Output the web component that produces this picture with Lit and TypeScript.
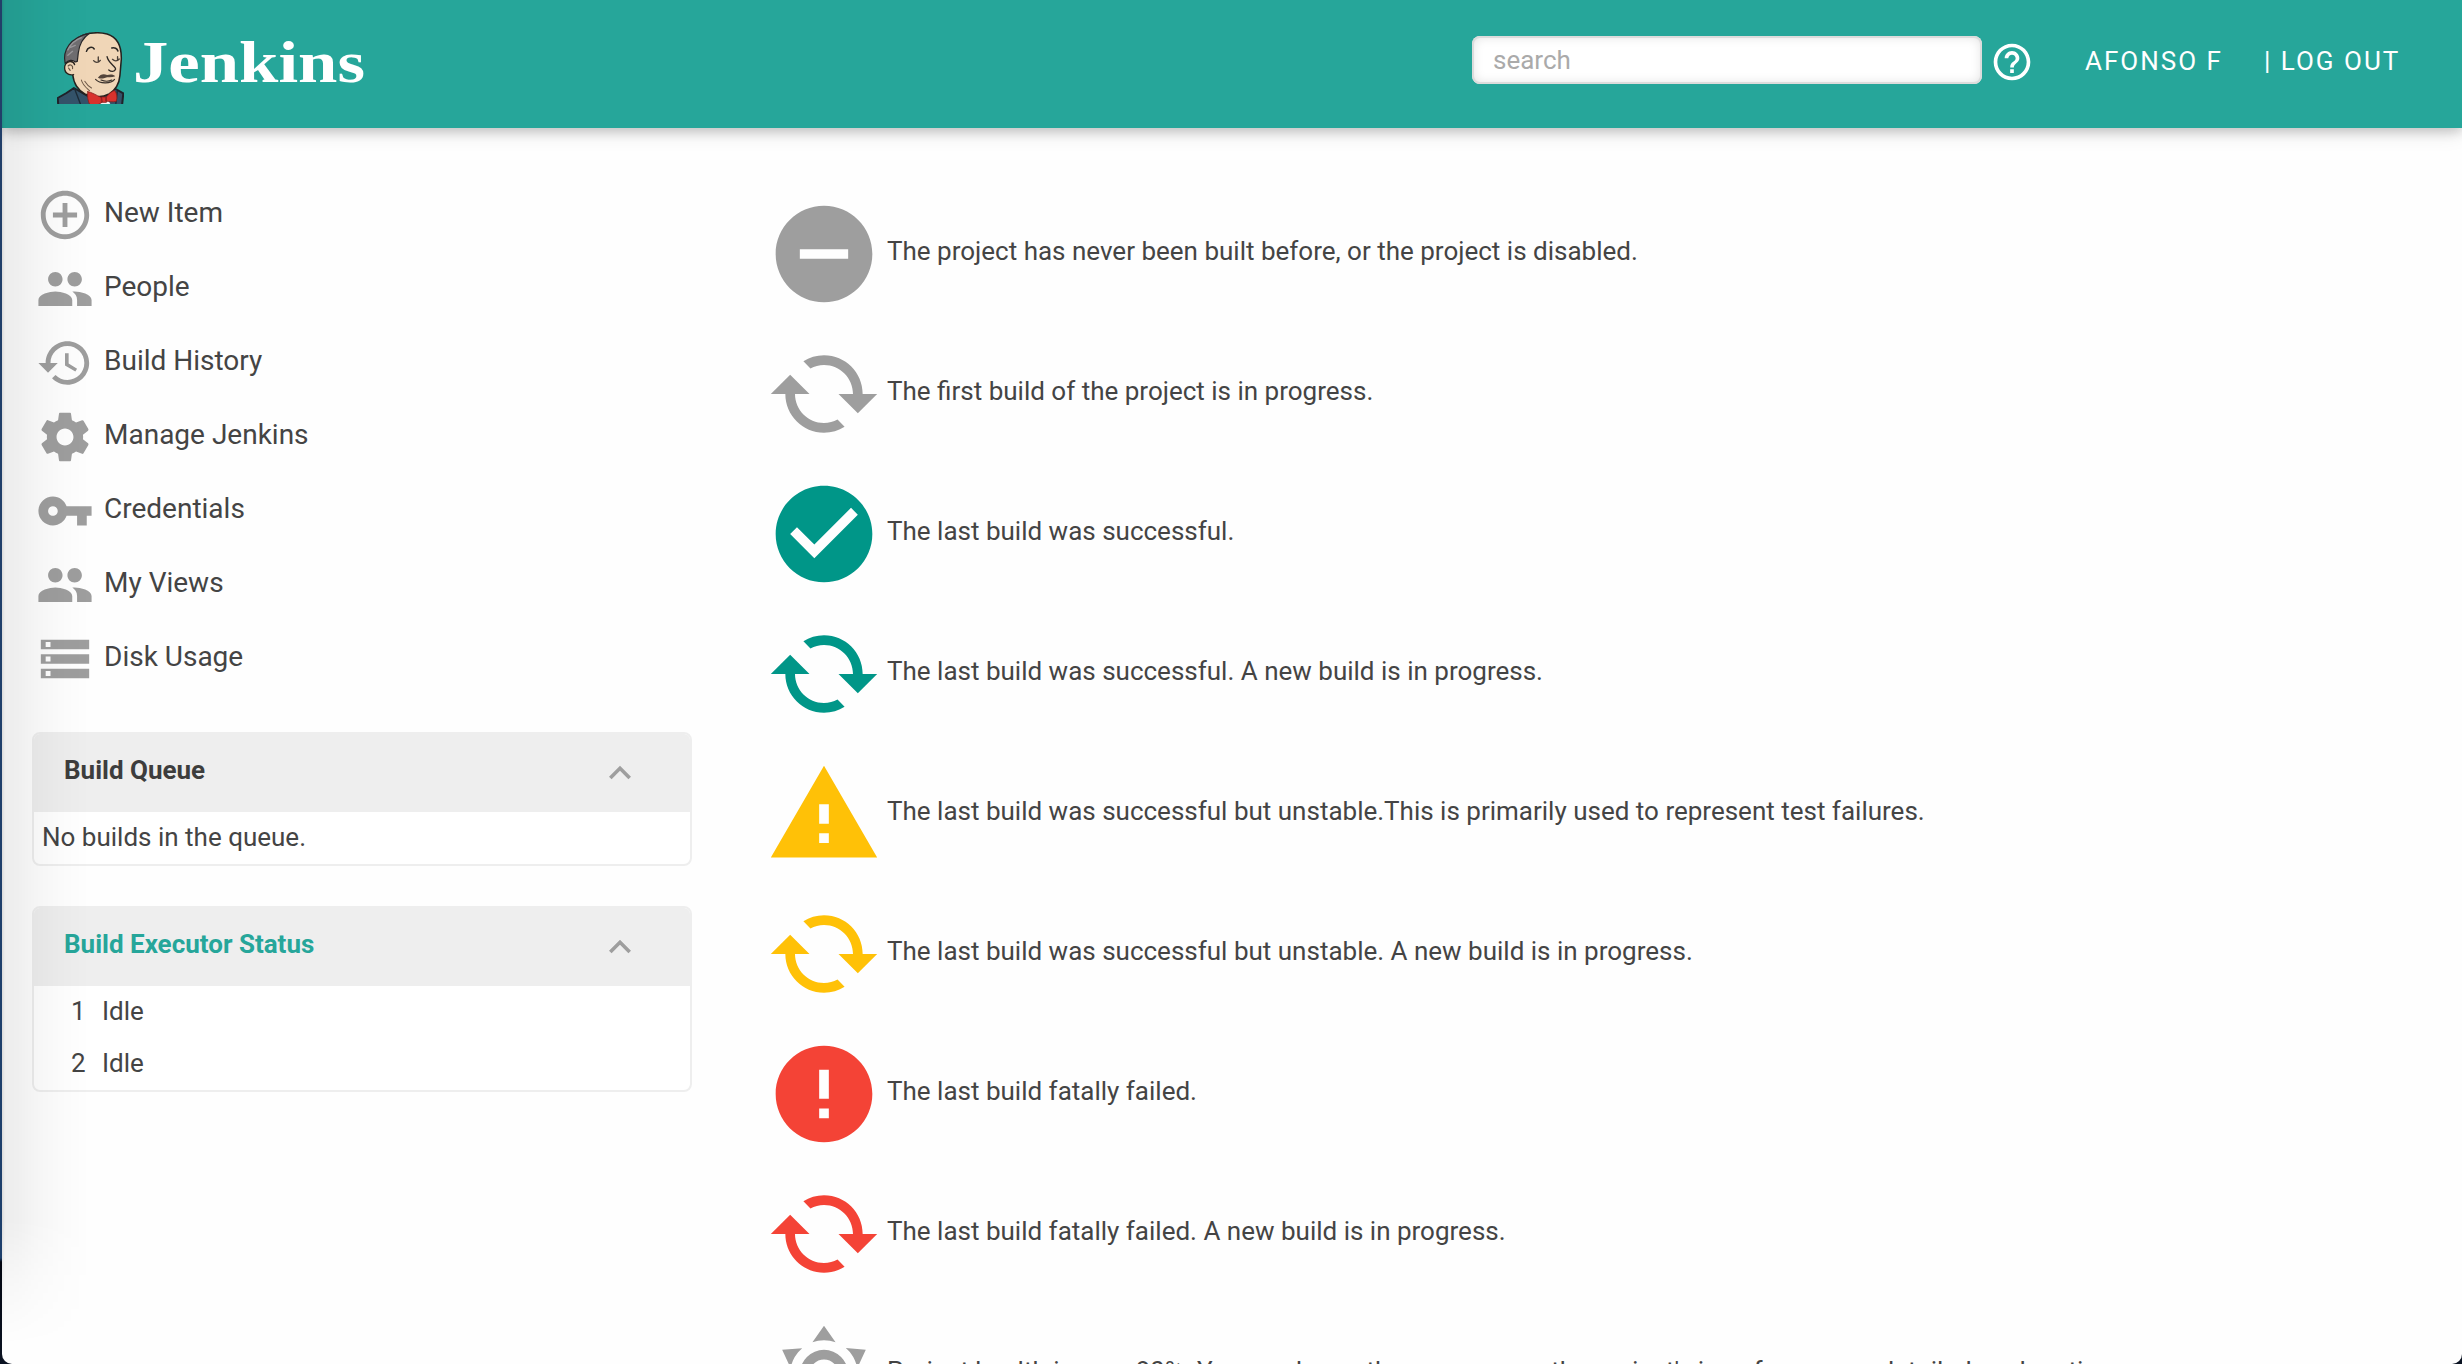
import { LitElement, html, css, svg } from "lit";
import { customElement, property } from "lit/decorators.js";

const PATHS: Record<string, string> = {
  add: "M13 7h-2v4H7v2h4v4h2v-4h4v-2h-4V7zm-1-5C6.48 2 2 6.48 2 12s4.48 10 10 10 10-4.48 10-10S17.52 2 12 2zm0 18c-4.41 0-8-3.59-8-8s3.59-8 8-8 8 3.59 8 8-3.59 8-8 8z",
  people:
    "M16 11c1.66 0 2.99-1.34 2.99-3S17.66 5 16 5c-1.66 0-3 1.34-3 3s1.34 3 3 3zm-8 0c1.66 0 2.99-1.34 2.99-3S9.66 5 8 5C6.34 5 5 6.34 5 8s1.34 3 3 3zm0 2c-2.33 0-7 1.17-7 3.5V19h14v-2.500c0-2.33-4.67-3.500-7-3.500zm8 0c-.29 0-.62.02-.97.05 1.160.84 1.970 1.970 1.970 3.450V19h6v-2.500c0-2.330-4.670-3.500-7-3.500z",
  history:
    "M13 3c-4.970 0-9 4.030-9 9H1l3.890 3.890.070.140L9 12H6c0-3.870 3.130-7 7-7s7 3.130 7 7-3.130 7-7 7c-1.930 0-3.680-.790-4.940-2.060l-1.420 1.420C8.270 19.990 10.510 21 13 21c4.970 0 9-4.030 9-9s-4.030-9-9-9zm-1 5v5l4.280 2.540.720-1.210-3.500-2.080V8H12z",
  settings:
    "M19.430 12.980c.040-.320.070-.640.070-.980s-.030-.660-.070-.980l2.110-1.650c.190-.150.240-.420.120-.640l-2-3.460c-.120-.220-.390-.300-.610-.220l-2.490 1c-.520-.400-1.080-.730-1.690-.980l-.380-2.650C14.460 2.180 14.250 2 14 2h-4c-.250 0-.460.180-.490.420l-.380 2.650c-.610.250-1.170.590-1.690.980l-2.490-1c-.230-.090-.490 0-.610.220l-2 3.460c-.130.220-.070.490.120.640l2.110 1.650c-.040.320-.070.650-.070.980s.030.660.070.980l-2.110 1.650c-.190.150-.240.420-.120.640l2 3.460c.120.220.390.300.610.220l2.490-1c.520.400 1.080.730 1.690.980l.380 2.650c.030.240.240.420.490.420h4c.250 0 .460-.180.490-.420l.380-2.650c.610-.250 1.170-.590 1.690-.980l2.490 1c.230.090.490 0 .610-.220l2-3.460c.120-.220.070-.490-.120-.640l-2.110-1.650zM12 15.500c-1.930 0-3.500-1.570-3.500-3.500s1.570-3.500 3.500-3.500 3.500 1.570 3.500 3.500-1.570 3.500-3.500 3.500z",
  key: "M12.650 10C11.830 7.670 9.610 6 7 6c-3.310 0-6 2.690-6 6s2.690 6 6 6c2.610 0 4.830-1.670 5.650-4H17v4h4v-4h2v-4H12.650zM7 14c-1.100 0-2-.900-2-2s.900-2 2-2 2 .900 2 2-.900 2-2 2z",
  storage: "M2 20h20v-4H2v4zm2-3h2v2H4v-2zM2 4v4h20V4H2zm4 3H4V5h2v2zm-4 7h20v-4H2v4zm2-3h2v2H4v-2z",
  chevron: "M12 8l-6 6 1.410 1.410L12 10.830l4.590 4.580L18 14z",
  help: "M11 18h2v-2h-2v2zm1-16C6.480 2 2 6.480 2 12s4.480 10 10 10 10-4.480 10-10S17.520 2 12 2zm0 18c-4.410 0-8-3.590-8-8s3.590-8 8-8 8 3.590 8 8-3.590 8-8 8zm0-14c-2.210 0-4 1.790-4 4h2c0-1.100.900-2 2-2s2 .900 2 2c0 2-3 1.750-3 5h2c0-2.250 3-2.500 3-5 0-2.210-1.790-4-4-4z",
  minus: "M12 2C6.480 2 2 6.480 2 12s4.480 10 10 10 10-4.480 10-10S17.520 2 12 2zm5 11H7v-2h10v2z",
  check:
    "M12 2C6.480 2 2 6.480 2 12s4.480 10 10 10 10-4.480 10-10S17.520 2 12 2zm-2 15l-5-5 1.410-1.410L10 14.170l7.590-7.590L19 8l-9 9z",
  cycle:
    "M5 8l4 4H6c0 3.310 2.690 6 6 6 1.010 0 1.970-.250 2.800-.700l1.460 1.460C15.030 19.540 13.570 20 12 20c-4.420 0-8-3.580-8-8H1l4-4zm13 4c0-3.310-2.690-6-6-6-1.010 0-1.970.250-2.800.700L7.740 5.240C8.970 4.460 10.430 4 12 4c4.420 0 8 3.580 8 8h3l-4 4-4-4h3z",
  warning: "M1 21h22L12 2 1 21zm12-3h-2v-2h2v2zm0-4h-2v-4h2v4z",
  error: "M12 2C6.480 2 2 6.480 2 12s4.480 10 10 10 10-4.480 10-10S17.520 2 12 2zm1 15h-2v-2h2v2zm0-4h-2V7h2v6z",
  sunny:
    "M12,7A5,5 0 0,1 17,12A5,5 0 0,1 12,17A5,5 0 0,1 7,12A5,5 0 0,1 12,7M12,9A3,3 0 0,0 9,12A3,3 0 0,0 12,15A3,3 0 0,0 15,12A3,3 0 0,0 12,9M12,2L14.39,5.42C13.65,5.15 12.84,5 12,5C11.16,5 10.35,5.15 9.61,5.42L12,2M3.34,7L7.5,6.65C6.9,7.16 6.36,7.78 5.94,8.5C5.5,9.24 5.25,10 5.11,10.79L3.34,7M3.36,17L5.12,13.23C5.26,14 5.53,14.78 5.95,15.5C6.37,16.24 6.91,16.86 7.5,17.37L3.36,17M20.65,7L18.88,10.79C18.74,10 18.47,9.23 18.05,8.5C17.63,7.78 17.1,7.15 16.5,6.64L20.65,7M20.64,17L16.5,17.36C17.09,16.85 17.62,16.22 18.04,15.5C18.46,14.77 18.73,14 18.87,13.21L20.64,17M12,22L9.59,18.56C10.33,18.83 11.14,19 12,19C12.82,19 13.63,18.83 14.37,18.56L12,22Z",
};

@customElement("ui-icon")
class UiIcon extends LitElement {
  @property() name = "add";
  static styles = css`
    :host { display: block; flex: none; }
    .glyph { display: block; width: 100%; height: 100%; fill: currentColor; }
  `;
  render() {
    return html`<svg class="glyph" viewBox="0 0 24 24">${svg`<path d=${PATHS[this.name]}></path>`}</svg>`;
  }
}

@customElement("butler-logo")
class ButlerLogo extends LitElement {
  static styles = css`
    :host { display: block; flex: none; width: 67px; height: 72px; }
    .art { display: block; width: 67px; height: 72px; }
  `;
  render() {
    return html`<svg class="art" viewBox="52 36 198 216" preserveAspectRatio="none" stroke-linecap="round" stroke-linejoin="round">
      <path d="M56 258 L54 234 L80 219 L102 204 L150 232 L206 222 L220 204 L248 220 L244 258Z" fill="#34536a" stroke="#20232a" stroke-width="6"/>
      <path d="M104 206 L122 254 M230 214 L226 250" stroke="#1d2c38" stroke-width="4" fill="none"/>
      <path d="M98 162 C102 192 112 208 134 222 C154 232 186 234 206 222 C228 208 236 190 238 166 L242 118 C243 82 232 52 200 42 C170 34 130 38 104 62 C82 88 84 136 98 162Z" fill="#f0d6b7" stroke="#25221f" stroke-width="4.500"/>
      <path d="M76 130 C68 92 90 52 148 40 C128 54 118 74 115 98 L112 124 L106 126 C98 118 86 120 76 130Z" fill="#6f6d70" stroke="#28272a" stroke-width="3.500"/>
      <path d="M84 90 C92 72 106 60 124 53 M84 106 L98 94 M92 82 L106 76" fill="none" stroke="#9a989b" stroke-width="4"/>
      <path d="M104 134 C100 120 80 122 75 138 C72 156 84 168 101 164" fill="#f0d6b7" stroke="#29241f" stroke-width="4"/>
      <path d="M85 138 C91 131 100 136 98 146 M86 144 L91 151" fill="none" stroke="#695646" stroke-width="3.500"/>
      <path d="M139 94 C142 82 156 78 162 87 M214 84 C222 81 230 86 232 93" fill="none" stroke="#2c2825" stroke-width="4.500"/>
      <path d="M160 122 C166 129 174 129 180 121 M174 111 L174 126 M216 118 C222 124 230 124 236 117 M231 110 L231 120" fill="none" stroke="#4a4038" stroke-width="4"/>
      <path d="M200 110 C203 130 228 140 225 148 C222 156 212 156 205 150" fill="none" stroke="#2f2925" stroke-width="4"/>
      <path d="M173 173 C180 162 190 160 200 165 C210 162 220 163 224 169 C214 174 202 170 193 174 C184 177 178 176 173 173Z" fill="#54453b"/>
      <path d="M166 178 C178 191 210 193 222 178 M182 180 C194 185 206 184 214 180" fill="none" stroke="#3a312b" stroke-width="3.500"/>
      <path d="M124 180 C128 196 140 204 148 212 M134 184 C140 194 146 200 154 204" fill="none" stroke="#6d5847" stroke-width="3"/>
      <path d="M176 256 L186 238 L205 242 L211 256Z" fill="#f4f2f0"/>
      <path d="M143 215 C154 216 168 226 184 233 L186 246 C176 254 162 260 150 256 C143 244 141 228 143 215Z M197 232 C206 220 216 212 223 212 C229 220 231 234 227 244 C216 247 206 245 197 243Z M184 231 H198 V247 H184Z" fill="#d9322d" stroke="#8a1f1e" stroke-width="2.500"/>
    </svg>`;
  }
}

@customElement("side-card")
class SideCard extends LitElement {
  @property() heading = "";
  @property({ type: Boolean }) accent = false;
  static styles = css`
    :host { display: block; }
    .card { box-sizing: border-box; border: 2px solid #eee; border-radius: 8px; background: #fff; overflow: hidden; }
    .head { display: flex; align-items: center; justify-content: space-between; height: 78px; padding: 0 48px 0 30px; background: #eee; }
    .title { padding-bottom: 7px; font-weight: 700; font-size: 26px; line-height: 32px; color: #3d3d3d; }
    .title.accent { color: #26a69a; }
    ui-icon { width: 44px; height: 44px; color: #9e9e9e; }
  `;
  render() {
    return html`<section class="card">
      <div class="head">
        <div class="title ${this.accent ? "accent" : ""}">${this.heading}</div>
        <ui-icon name="chevron"></ui-icon>
      </div>
      <slot></slot>
    </section>`;
  }
}

const MENU: [string, string][] = [
  ["add", "New Item"],
  ["people", "People"],
  ["history", "Build History"],
  ["settings", "Manage Jenkins"],
  ["key", "Credentials"],
  ["people", "My Views"],
  ["storage", "Disk Usage"],
];

const LEGEND: [string, string, string][] = [
  ["minus", "grey", "The project has never been built before, or the project is disabled."],
  ["cycle", "grey", "The first build of the project is in progress."],
  ["check", "green", "The last build was successful."],
  ["cycle", "green", "The last build was successful. A new build is in progress."],
  ["warning", "amber", "The last build was successful but unstable.This is primarily used to represent test failures."],
  ["cycle", "amber", "The last build was successful but unstable. A new build is in progress."],
  ["error", "red", "The last build fatally failed."],
  ["cycle", "red", "The last build fatally failed. A new build is in progress."],
  ["sunny", "grey", "Project health is over 80%. You can hover the mouse over the project's icon for a more detailed explanation."],
];

@customElement("app-root")
class AppRoot extends LitElement {
  static styles = css`
    :host {
      display: block; box-sizing: border-box; width: 2462px; height: 1364px; padding-left: 2px; overflow: hidden;
      background: linear-gradient(#223f69 0, #1d3f6c 1258px, #020611 1262px, #0b1322 100%);
      font-family: Roboto, "Liberation Sans", sans-serif; font-size: 26px; line-height: 32px; color: #444;
    }
    .window { position: relative; height: 1364px; overflow: hidden; background: #fefefe; border-radius: 0 0 10px 10px; }
    .bar {
      position: relative; display: flex; align-items: center; height: 128px; box-sizing: border-box; padding-left: 55px;
      background: #26a69a; color: #fff;
      box-shadow: 0 4px 10px rgba(0, 0, 0, 0.16), 0 4px 20px rgba(0, 0, 0, 0.12);
    }
    butler-logo { margin-top: 8px; }
    .word { display: block; width: 240px; height: 60px; margin: 0 auto 0 6px; overflow: visible; fill: #fff; font: 700 60px "Liberation Serif", serif; }
    .search {
      box-sizing: border-box; width: 510px; height: 48px; margin-bottom: 8px; padding: 8px 21px; border-radius: 8px; background: #fff;
      color: #aaa; box-shadow: inset 0 0 0 2px #dcdcdc, inset 0 0 12px rgba(0, 0, 0, 0.14);
    }
    .help { width: 44px; height: 44px; margin: 0 51px 4px 8px; }
    .nav { margin-bottom: 6px; white-space: pre; letter-spacing: 2px; }
    .user { width: 179px; }
    .exit { width: 198px; }
    .body { display: flex; }
    .side { width: 660px; padding: 50px 0 0 30px; }
    .item { display: flex; align-items: center; gap: 10px; height: 74px; padding-left: 4px; font-size: 28px; }
    .item ui-icon { width: 58px; height: 58px; color: #9e9e9e; }
    .label { padding-bottom: 5px; white-space: nowrap; }
    .cards { display: grid; gap: 40px; padding-top: 36px; }
    .line { display: flex; align-items: center; height: 50px; padding: 0 0 2px 8px; }
    .slot { width: 31px; padding-left: 29px; }
    .legend { padding: 56px 0 0 74px; }
    .state { display: flex; align-items: center; gap: 5px; height: 140px; }
    .state ui-icon { width: 116px; height: 116px; }
    .grey { color: #9e9e9e; }
    .green { color: #009688; }
    .amber { color: #ffc107; }
    .red { color: #f44336; }
    .text { padding-bottom: 6px; white-space: nowrap; }
    .shade {
      position: absolute; left: 0; top: 0; width: 90px; height: 1350px; pointer-events: none;
      background:
        linear-gradient(90deg, rgba(0, 0, 0, 0.08), rgba(0, 0, 0, 0) 3px),
        linear-gradient(90deg, rgba(0, 0, 0, 0.066) 0, rgba(0, 0, 0, 0.06) 16px, rgba(0, 0, 0, 0.035) 34px, rgba(0, 0, 0, 0.014) 58px, rgba(0, 0, 0, 0) 88px);
      mask-image: linear-gradient(#000 0, #000 1220px, rgba(0, 0, 0, 0.45) 1280px, transparent 1345px);
    }
  `;
  render() {
    return html`<div class="window">
      <header class="bar">
        <butler-logo></butler-logo>
        <svg class="word"><text x="3" y="47.500" textLength="232" lengthAdjust="spacingAndGlyphs">Jenkins</text></svg>
        <div class="search">search</div>
        <ui-icon class="help" name="help"></ui-icon>
        <div class="nav user">AFONSO F</div>
        <div class="nav exit">| LOG OUT</div>
      </header>
      <div class="body">
        <aside class="side">
          ${MENU.map(([icon, label]) => html`<div class="item"><ui-icon name=${icon}></ui-icon><div class="label">${label}</div></div>`)}
          <div class="cards">
            <side-card heading="Build Queue"><div class="line">No builds in the queue.</div></side-card>
            <side-card heading="Build Executor Status" accent>
              ${["1", "2"].map((n) => html`<div class="line"><div class="slot">${n}</div><div>Idle</div></div>`)}
            </side-card>
          </div>
        </aside>
        <main class="legend">
          ${LEGEND.map(([icon, tone, text]) => html`<div class="state"><ui-icon class=${tone} name=${icon}></ui-icon><div class="text">${text}</div></div>`)}
        </main>
      </div>
      <div class="shade"></div>
    </div>`;
  }
}
